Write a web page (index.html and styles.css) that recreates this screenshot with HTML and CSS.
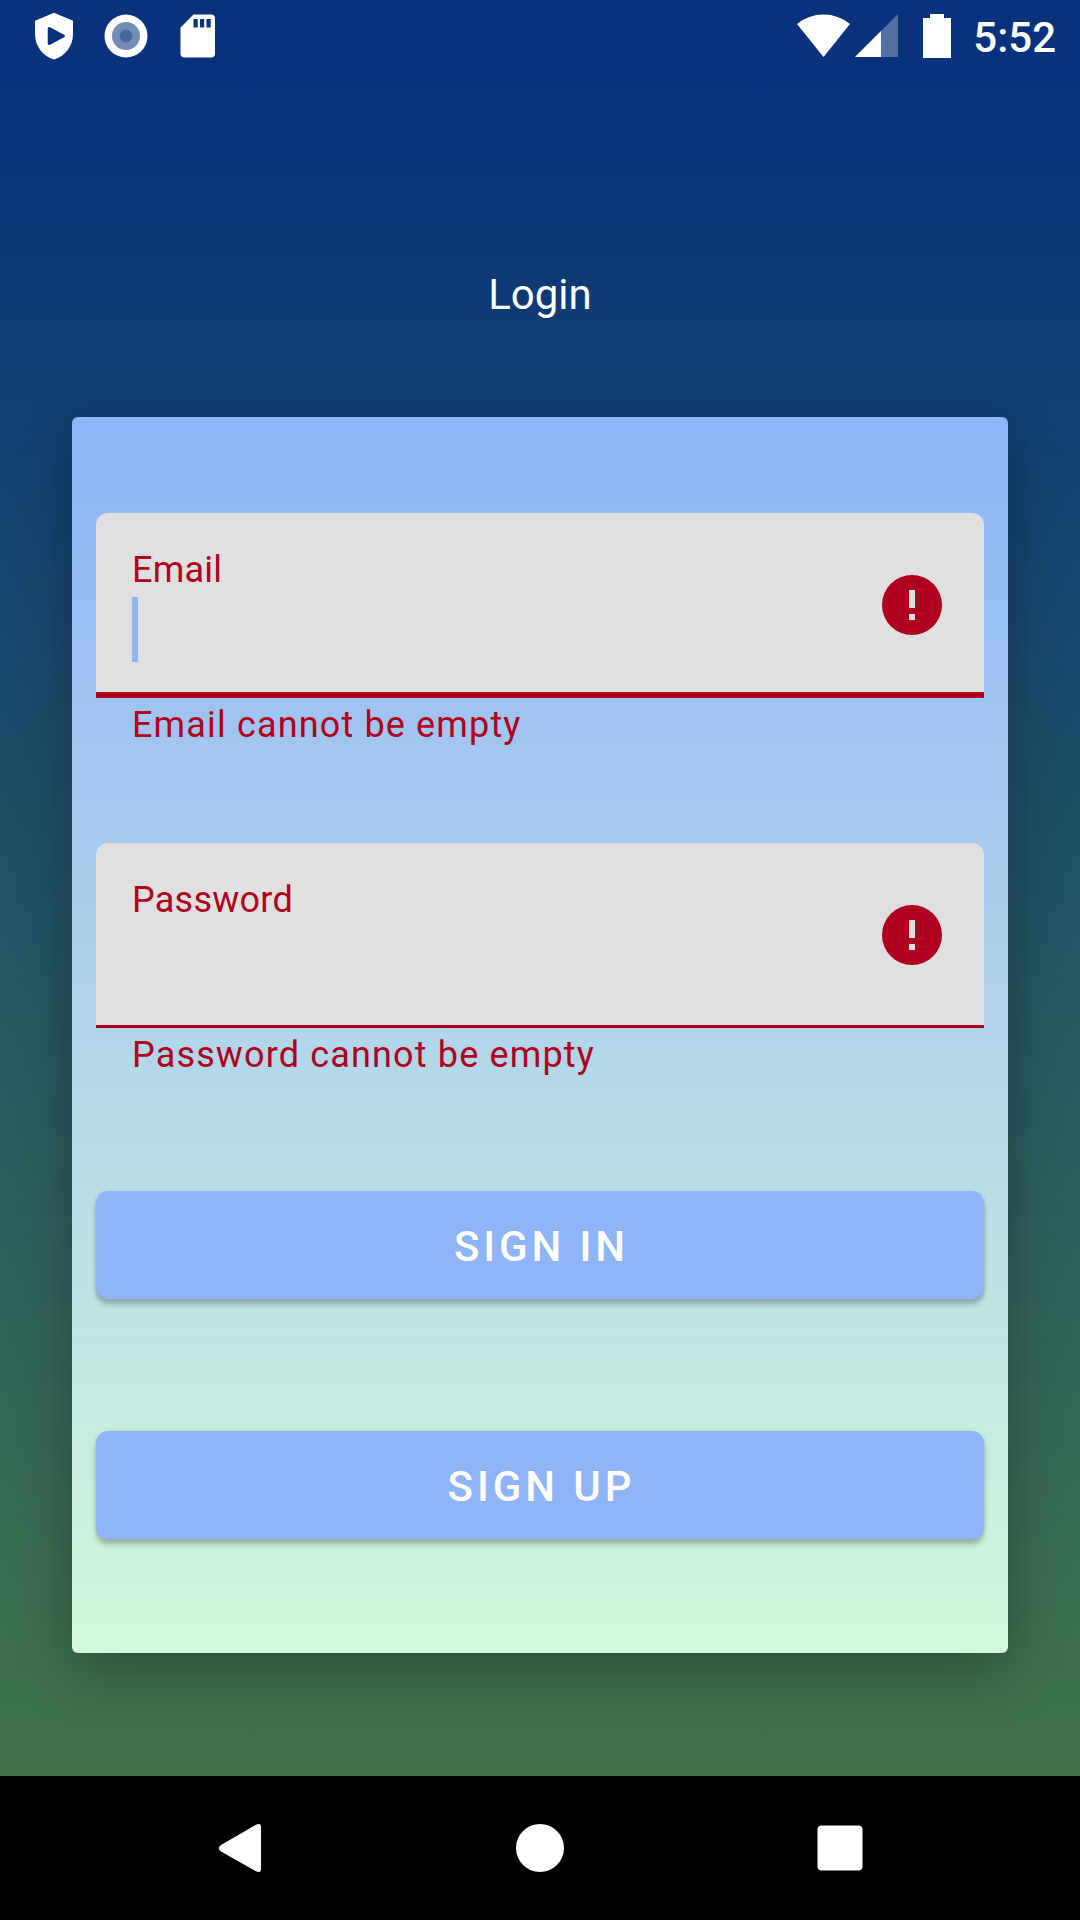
FILE: index.html
```html
<!DOCTYPE html>
<html lang="en">
<head>
<meta charset="utf-8">
<title>Login</title>
<link rel="stylesheet" href="styles.css">
</head>
<body>
<div class="screen">
  <header class="status">
    <div class="notifications">
      <svg width="38" height="48" viewBox="0 0 38 48"><path fill="#fff" fill-rule="evenodd" d="M19 .7 38 8.7V22C38 34 30 44.500 19 47.500 8 44.500 0 34 0 22V8.700ZM12.700 17V31Q12.700 34 15.500 32.500L29 25.300Q31 24 29 22.700L15.500 15.500Q12.700 14 12.700 17Z"/></svg>
      <svg width="44" height="44" viewBox="0 0 44 44"><circle cx="22" cy="22" r="21.500" fill="#fff"/><circle cx="22" cy="22" r="14" fill="#748db7"/><circle cx="22" cy="22" r="6.400" fill="#46689e"/></svg>
      <svg width="36" height="44" viewBox="0 0 36 44"><path fill="#fff" fill-rule="evenodd" d="M13.500.500H31Q35 .500 35 4.500V39.500Q35 43.500 31 43.500H4.500Q.500 43.500 .500 39.500V13.500ZM13.500 5V13.500H17.700V5ZM20 5V13.500H24.200V5ZM26.500 5V13.500H30.700V5Z"/></svg>
    </div>
    <div class="system">
      <svg width="53" height="44" viewBox="0 0 53 44"><path fill="#fff" d="M0 10Q11.500.500 26.500.500T53 10L26.500 43Z"/></svg>
      <svg class="signal" width="43" height="44" viewBox="0 0 43 44"><path fill="#fff" fill-opacity=".3" d="M43 0V43H0Z"/><path fill="#fff" d="M26 17V43H0Z"/></svg>
      <svg class="battery" width="28" height="44" viewBox="0 0 28 44"><path fill="#fff" d="M7 0H21V4H28V44H0V4H7Z"/></svg>
      <span class="clock">5:52</span>
    </div>
  </header>
  <main class="content">
    <h1 class="title">Login</h1>
    <form class="card">
      <div class="field focused">
        <div class="entry"><label class="label">Email</label><span class="caret"></span></div>
        <svg class="alert" width="60" height="60" viewBox="0 0 60 60"><path fill="#b00020" fill-rule="evenodd" d="M30 0A30 30 0 1 1 30 60A30 30 0 1 1 30 0ZM27 15V33H33V15ZM27 39V45H33V39Z"/></svg>
      </div>
      <p class="helper">Email cannot be empty</p>
      <div class="field">
        <div class="entry"><label class="label">Password</label></div>
        <svg class="alert" width="60" height="60" viewBox="0 0 60 60"><path fill="#b00020" fill-rule="evenodd" d="M30 0A30 30 0 1 1 30 60A30 30 0 1 1 30 0ZM27 15V33H33V15ZM27 39V45H33V39Z"/></svg>
      </div>
      <p class="helper">Password cannot be empty</p>
      <button class="button sign-in" type="button">SIGN IN</button>
      <button class="button sign-up" type="button">SIGN UP</button>
    </form>
  </main>
  <nav class="navbar">
    <svg width="48" height="48" viewBox="0 0 48 48"><path fill="#fff" d="M5 21 40 .700Q45 -1.200 45 3V45Q45 49.200 40 47.300L5 27.500Q1 24 5 21Z"/></svg>
    <svg width="48" height="48" viewBox="0 0 48 48"><circle cx="24" cy="24" r="24" fill="#fff"/></svg>
    <svg width="48" height="48" viewBox="0 0 48 48"><rect x="1.500" y="1.500" width="45" height="45" rx="4" fill="#fff"/></svg>
  </nav>
</div>
</body>
</html>
```
FILE: styles.css
```css
* { box-sizing: border-box; }
body { margin: 0; font-family: Roboto, sans-serif; }
svg { display: block; flex: none; }
.screen {
  width: 1080px;
  height: 1920px;
  display: flex;
  flex-direction: column;
  overflow: hidden;
  background: linear-gradient(#08327b 0, #08327b 90px, #40734b 1776px);
}
.status {
  height: 72px;
  padding: 0 24px 0 35px;
  display: flex;
  justify-content: space-between;
  align-items: center;
}
.notifications { display: flex; align-items: center; gap: 31px; }
.notifications svg:last-child { margin-left: 1px; }
.system { display: flex; align-items: center; }
.signal { margin-left: 5px; }
.battery { margin-left: 25px; }
.clock {
  margin-left: 22px;
  padding-top: 4px;
  font-size: 42px;
  font-weight: 500;
  line-height: 50px;
  color: #fff;
}
.content { flex: 1; padding: 0 72px; }
.title {
  margin: 0;
  padding-top: 198px;
  height: 345px;
  font-size: 42px;
  font-weight: 400;
  line-height: 50px;
  text-align: center;
  color: #fff;
}
.card {
  height: 1236px;
  padding: 96px 24px 0;
  display: flex;
  flex-direction: column;
  border-radius: 6px;
  background: linear-gradient(#8fb4f7, #d3f8dc);
  box-shadow: 0 24px 60px rgba(0, 0, 0, .24), 0 0 30px rgba(0, 0, 0, .05);
}
.field {
  height: 185px;
  flex: none;
  padding: 0 42px 0 36px;
  display: flex;
  justify-content: space-between;
  border-radius: 12px 12px 0 0;
  background: linear-gradient(#b00020, #b00020) bottom / 100% 3px no-repeat #e0e0e0;
}
.field.focused { background-size: 100% 6px; }
.entry { display: flex; flex-direction: column; align-items: flex-start; }
.label {
  padding-top: 36px;
  font-size: 36px;
  line-height: 42px;
  letter-spacing: .25px;
  color: #b00020;
}
.caret { width: 6px; height: 65px; margin-top: 6px; background: #8fb4f7; }
.alert { margin-top: 62px; }
.helper {
  margin: 0 0 97px;
  padding: 6px 36px 0;
  height: 48px;
  font-size: 36px;
  line-height: 42px;
  letter-spacing: 1.15px;
  color: #b00020;
}
.button {
  height: 108px;
  flex: none;
  padding: 4px 0 0 3px;
  border: 0;
  border-radius: 12px;
  background: #8fb4f7;
  box-shadow: 0 6px 5px rgba(0, 0, 0, .2), 0 1px 4px rgba(0, 0, 0, .14);
  font: 500 42px/50px Roboto, sans-serif;
  letter-spacing: 3.9px;
  color: #fff;
}
.sign-in { margin-top: 18px; }
.sign-up { margin-top: 132px; }
.navbar {
  height: 144px;
  padding: 0 216px;
  display: flex;
  justify-content: space-between;
  align-items: center;
  background: #000;
}
```
